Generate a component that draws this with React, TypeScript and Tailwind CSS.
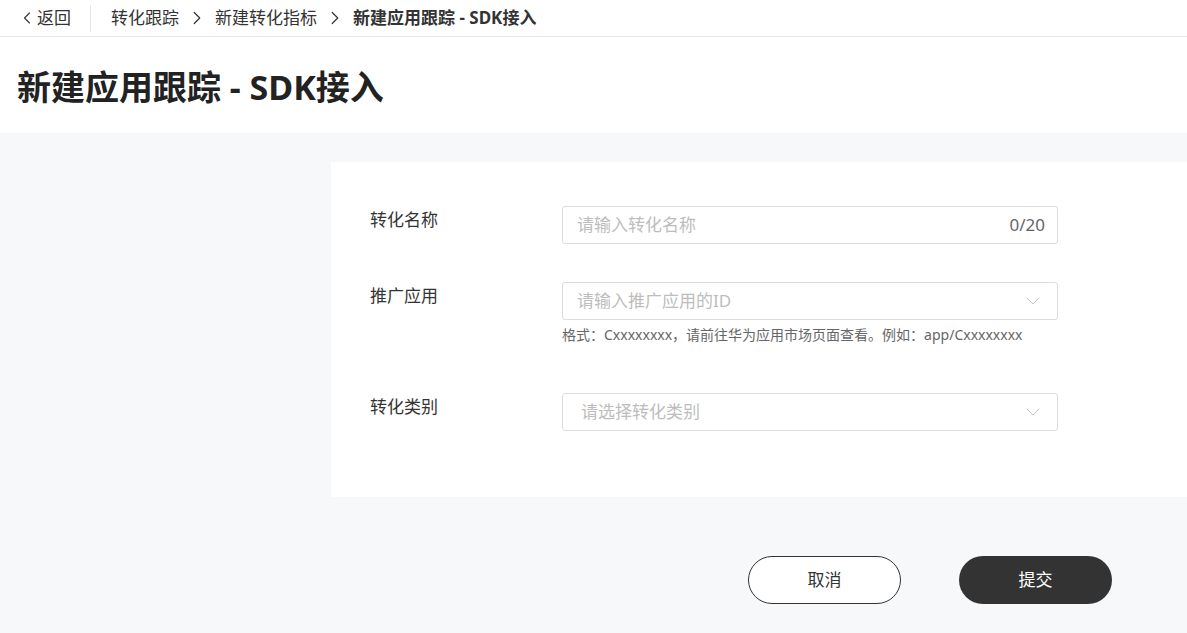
import { ChevronDown, ChevronLeft, ChevronRight } from 'lucide-react';

const font = { fontFamily: '"Noto Sans", "Noto Sans CJK SC", sans-serif' };

function Breadcrumb() {
  return (
    <div className="h-[37px] flex items-center border-b border-[#e8e8e8] bg-white text-[17px] text-[#333]">
      <button type="button" className="flex items-center pl-[17px] pr-[19px] text-[#333]">
        <ChevronLeft className="w-[20px] h-[20px]" strokeWidth={1.3} />
        <span>返回</span>
      </button>
      <div className="w-px h-[27px] bg-[#e5e5e5]" />
      <div className="flex items-center pl-[20px] gap-[7px]">
        <span>转化跟踪</span>
        <ChevronRight className="w-[22px] h-[22px]" strokeWidth={1.3} />
        <span>新建转化指标</span>
        <ChevronRight className="w-[22px] h-[22px]" strokeWidth={1.3} />
        <span className="font-bold">新建应用跟踪 - SDK接入</span>
      </div>
    </div>
  );
}

function Field({
  label,
  placeholder,
  counter,
  select,
  hint,
  padLeft = 'pl-[14px]',
}: {
  label: string;
  placeholder: string;
  counter?: string;
  select?: boolean;
  hint?: string;
  padLeft?: string;
}) {
  return (
    <div className="flex">
      <div className="w-[192px] pt-[1px] text-[17px] text-[#333]">{label}</div>
      <div className="w-[496px]">
        <div
          className={`h-[38px] rounded-[3px] border border-[#dcdcdc] flex items-center ${padLeft} pr-[12px] text-[17px]`}
        >
          <span className="flex-1 text-[#bdbdbd]">{placeholder}</span>
          {counter && <span className="text-[#666]">{counter}</span>}
          {select && <ChevronDown className="w-[24px] h-[24px] text-[#c4c4c4]" strokeWidth={1} />}
        </div>
        {hint && <p className="mt-[4px] text-[14px] text-[#666]">{hint}</p>}
      </div>
    </div>
  );
}

export default function App() {
  return (
    <div className="min-h-[633px] bg-[#f7f8fa]" style={font}>
      <Breadcrumb />
      <div className="h-[96px] bg-white flex items-center pl-[17px]">
        <h1 className="text-[34px] font-bold text-[#222] pt-[4px]">新建应用跟踪 - SDK接入</h1>
      </div>
      <div className="pt-[29px] pl-[331px]">
        <div className="bg-white pt-[44px] pb-[66px] pl-[39px] flex flex-col">
          <Field label="转化名称" placeholder="请输入转化名称" counter="0/20" />
          <div className="h-[38px]" />
          <Field
            label="推广应用"
            placeholder="请输入推广应用的ID"
            select
            hint="格式：Cxxxxxxxx，请前往华为应用市场页面查看。例如：app/Cxxxxxxxx"
          />
          <div className="h-[48px]" />
          <Field label="转化类别" placeholder="请选择转化类别" select padLeft="pl-[18px]" />
        </div>
      </div>
      <div className="flex justify-end gap-[58px] pr-[75px] pt-[59px]">
        <button
          type="button"
          className="w-[153px] h-[48px] rounded-full border border-[#333] bg-white text-[17px] text-[#333]"
        >
          取消
        </button>
        <button type="button" className="w-[153px] h-[48px] rounded-full bg-[#333] text-[17px] text-white">
          提交
        </button>
      </div>
    </div>
  );
}
